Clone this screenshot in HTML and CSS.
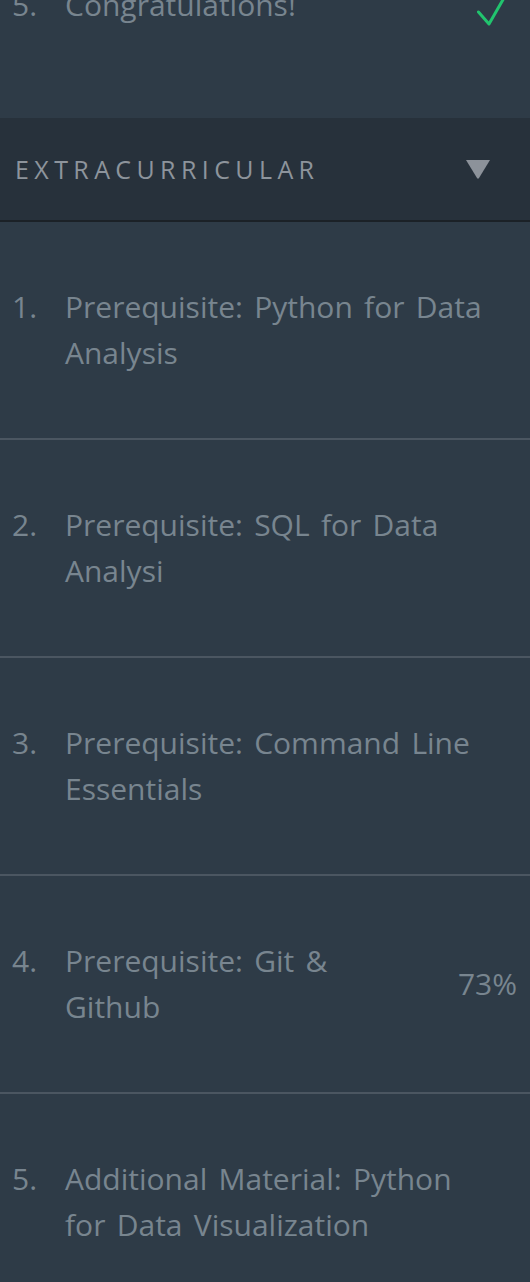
FILE: index.html
```html
<!DOCTYPE html>
<html lang="en">
<head>
<meta charset="utf-8">
<title>Lessons</title>
<link rel="stylesheet" href="styles.css">
</head>
<body>
<div class="sidebar">
  <ol class="lessons lessons--top">
    <li class="lesson lesson--last">
      <span class="num">5.</span>
      <span class="title">Congratulations!</span>
      <span class="status">
        <svg class="check" width="40" height="44" viewBox="0 0 40 44"><path d="M1.5 29 L12 41 L35 1" fill="none" stroke="#21c46e" stroke-width="3" stroke-linecap="round" stroke-linejoin="round"/></svg>
      </span>
    </li>
  </ol>
  <div class="section-head">
    <span class="section-title">EXTRACURRICULAR</span>
    <svg class="caret" width="26" height="20" viewBox="0 0 26 20"><path d="M1 1 H25 L14 19 Q13 20.5 12 19 Z" fill="#8c929a"/></svg>
  </div>
  <ol class="lessons">
    <li class="lesson"><span class="num">1.</span><span class="title">Prerequisite: Python for Data Analysis</span></li>
    <li class="lesson"><span class="num">2.</span><span class="title">Prerequisite: SQL for Data Analysi</span></li>
    <li class="lesson"><span class="num">3.</span><span class="title">Prerequisite: Command Line Essentials</span></li>
    <li class="lesson"><span class="num">4.</span><span class="title title--short">Prerequisite: Git &amp; Github</span><span class="status pct">73%</span></li>
    <li class="lesson"><span class="num">5.</span><span class="title">Additional Material: Python for Data Visualization</span></li>
  </ol>
</div>
</body>
</html>
```

FILE: styles.css
```css
html, body {
  margin: 0;
  padding: 0;
  background: #2e3b47;
}
body {
  font-family: "Open Sans", "DejaVu Sans", sans-serif;
  overflow: hidden;
}
.sidebar {
  display: flex;
  flex-direction: column;
}
.lessons {
  list-style: none;
  margin: 0;
  padding: 0;
}
.lessons--top {
  margin-top: -80px;
  padding-bottom: 28px;
}
.lesson {
  display: flex;
  align-items: center;
  padding: 62px 13px 62px 12px;
  border-bottom: 2px solid #4b5661;
  color: #78858f;
  font-size: 30px;
  font-weight: 400;
  line-height: 46px;
}
.lesson--last {
  border-bottom: none;
}
.num {
  flex: 0 0 53px;
  align-self: flex-start;
}
.title {
  flex: 1;
  margin-right: 28px;
  word-spacing: 3.5px;
}
.title--short {
  margin-right: 50px;
}
.status {
  flex: none;
}
.check {
  display: block;
}
.section-head {
  display: flex;
  align-items: center;
  justify-content: space-between;
  height: 102px;
  padding: 0 39px 0 15px;
  background: #27313b;
  border-bottom: 2px solid #1b2127;
}
.section-title {
  color: #8d949c;
  font-size: 25px;
  letter-spacing: 5.4px;
  font-weight: 400;
}
.caret {
  display: block;
}
```
